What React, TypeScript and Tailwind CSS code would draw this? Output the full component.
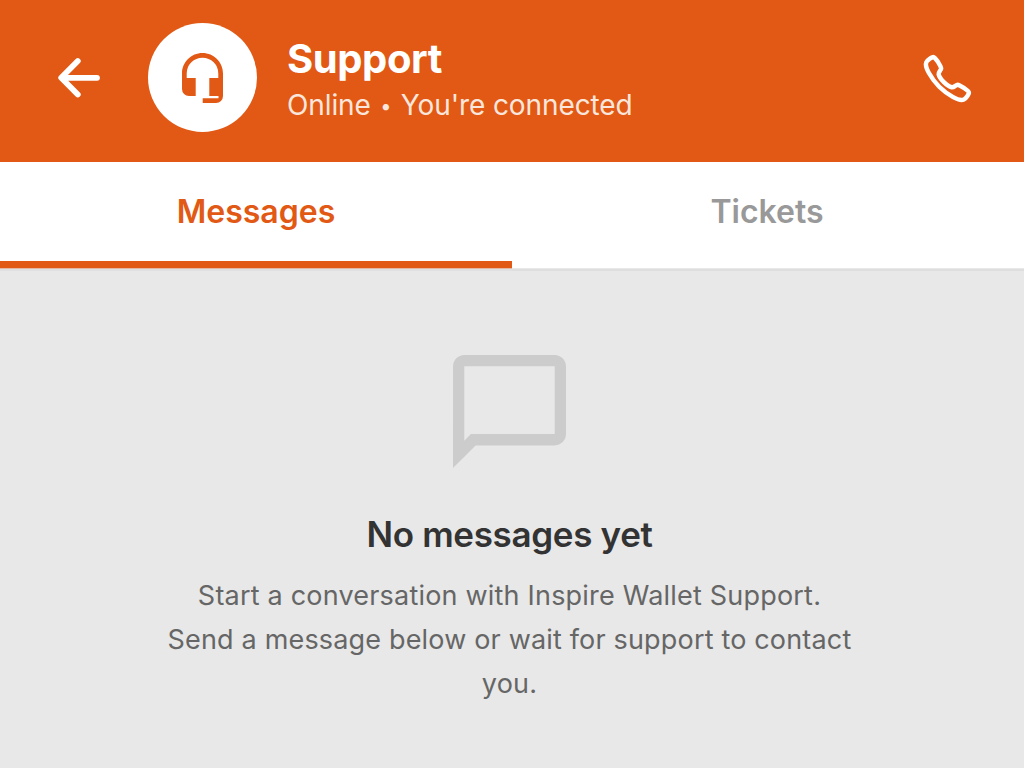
export default function App() {
  return (
    <div className="flex h-[768px] w-[1024px] flex-col overflow-hidden bg-[#e8e8e8] font-['Inter',sans-serif]">
      <header className="flex h-[162px] shrink-0 items-start bg-[#e15914] text-white">
        <button aria-label="Back" className="mt-[57px] ml-[57px] h-[42px] w-[44px]">
          <svg viewBox="0 0 44 42" className="h-[42px] w-[44px]" fill="none" stroke="currentColor" strokeWidth="5.800" strokeLinecap="round" strokeLinejoin="round">
            <path d="M20.800 4 4.200 20.800 20.800 37.500M5 20.800H40" />
          </svg>
        </button>
        <div className="mt-[23px] ml-[47px] flex size-[109px] items-center justify-center rounded-full bg-white">
          <svg viewBox="0 0 41 50" className="mr-px h-[50px] w-[41px] text-[#e15914]" fill="currentColor">
            <path d="M20.500 0C9.200 0 0 9.200 0 20.500V36A7 7 0 0 0 7 43H13.700V25H4.700V20.500A15.800 15.800 0 0 1 36.300 20.500V25H27.300V43H36.500V45.300H20.700V50H34A7 7 0 0 0 41 43V20.500C41 9.200 31.800 0 20.500 0Z" />
          </svg>
        </div>
        <div className="mt-[36px] ml-[31px] flex flex-col">
          <h1 className="-ml-px text-[40px] leading-[45px] font-bold tracking-[-0.4px] whitespace-nowrap">Support</h1>
          <p className="mt-[7px] -ml-px flex text-[28px] leading-[34px] tracking-[-0.1px] whitespace-nowrap text-[#fbe6dc]">
            <span>Online</span>
            <span className="w-[30px] text-center text-[20px] leading-[37px]">•</span>
            <span>You're connected</span>
          </p>
        </div>
        <button aria-label="Call" className="mt-[52px] mr-[50px] ml-auto size-[53px]">
          <svg viewBox="0 0 512 512" className="size-[53px]" fill="none" stroke="currentColor" strokeWidth="43" strokeMiterlimit="10">
            <path d="M451 374c-15.880-16-54.340-39.350-73-48.760-24.300-12.240-26.300-13.240-45.400.950-12.740 9.470-21.210 17.930-36.120 14.750s-47.310-21.110-75.680-49.390-47.340-61.620-50.530-76.480 5.410-23.230 14.790-36c13.220-18 12.220-21 .920-45.300-8.810-18.900-32.840-57-48.900-72.800C119.900 44 119.900 47 108.830 51.600A160.150 160.150 0 0 0 83 65.370C67 76 58.120 84.830 51.910 98.100s-9 44.380 23.070 102.640 54.570 88.050 101.140 134.490S258.500 406.640 310.850 436c64.760 36.270 89.600 29.200 102.910 23s22.180-15 32.830-31a159.090 159.090 0 0 0 13.800-25.800C465 391.170 468 391.170 451 374z" />
          </svg>
        </button>
      </header>
      <nav className="flex h-[106px] shrink-0 bg-white text-[32px] leading-[40px] font-semibold">
        <button className="flex w-1/2 justify-center border-b-[7px] border-[#e15914] pt-[30px] text-[#e15914]">Messages</button>
        <button className="flex w-1/2 justify-center pt-[30px] pr-[2px] text-[#999]">Tickets</button>
      </nav>
      <div className="flex h-[3px] shrink-0">
        <div className="w-1/2 border-t border-[#e3b8a2] bg-[#e0e0e0]" />
        <div className="w-1/2 border-t border-[#e8e8e8] bg-[#dedede]" />
      </div>
      <main className="flex flex-1 flex-col items-center pr-[5px]">
        <svg viewBox="2 2 20 20" className="mt-[84px] size-[113px] shrink-0" fill="#ccc">
          <path d="M4 4h16v12H5.170L4 17.170V4m0-2c-1.100 0-1.990.900-1.990 2L2 22l4-4h14c1.100 0 2-.900 2-2V4c0-1.100-.900-2-2-2H4z" />
        </svg>
        <h2 className="mt-[44px] text-[35px] leading-[44px] font-semibold tracking-[-0.33px] text-[#333]">No messages yet</h2>
        <div className="mt-[18px] flex flex-col items-center text-[27px] leading-[44px] tracking-[0.2px] text-[#666]">
          <span className="whitespace-nowrap">Start a conversation with Inspire Wallet Support.</span>
          <span className="tracking-[0.17px] whitespace-nowrap">Send a message below or wait for support to contact</span>
          <span>you.</span>
        </div>
      </main>
    </div>
  );
}
